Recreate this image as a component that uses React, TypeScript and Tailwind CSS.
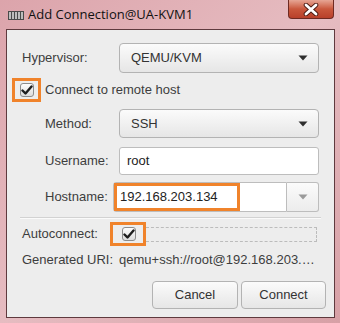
import React from 'react';

const font = { fontFamily: '"Liberation Sans", Arial, sans-serif' };

const CheckMark = () => (
  <div className="w-[14px] h-[14px] rounded-[3px] border border-[#8c8c8c] bg-gradient-to-b from-[#fdfdfd] to-[#dcdcdc] flex items-center justify-center">
    <svg width="12" height="11" viewBox="0 0 12 11">
      <path d="M1.5 5.5 L4.5 8.5 L10.5 1.5" fill="none" stroke="#1e1e1e" strokeWidth="2.4" strokeLinecap="round" strokeLinejoin="round" />
    </svg>
  </div>
);

const Arrow = ({ color = '#2e2e2e' }: { color?: string }) => (
  <svg width="10" height="6" viewBox="0 0 10 6">
    <path d="M0.5 0.5 L9.5 0.5 L5 5.5 Z" fill={color} />
  </svg>
);

const Dropdown = ({ value }: { value: string }) => (
  <div className="flex-1 h-full rounded-[4px] border border-[#b3b3b3] bg-gradient-to-b from-[#fbfbfb] to-[#e6e6e6] flex items-center justify-between pl-[11px] pr-[10px] text-[13px] text-[#333]">
    <span>{value}</span>
    <Arrow />
  </div>
);

export default function App() {
  return (
    <div className="w-[340px] h-[323px] flex flex-col bg-gradient-to-br from-[#dca4ab] via-[#e6bcc1] to-[#d7a0a6] overflow-hidden" style={font}>
      {/* Title bar */}
      <div className="h-[29px] relative flex items-center pl-[8px] shrink-0">
        <svg width="16" height="9" viewBox="0 0 16 9" className="mr-[4px] mt-[1px]">
          <rect x="0" y="0" width="16" height="9" fill="#4a4a4a" />
          <rect x="1" y="1" width="2" height="7" fill="#bdbdbd" />
          <rect x="4" y="1" width="2" height="7" fill="#bdbdbd" />
          <rect x="7" y="1" width="2" height="7" fill="#bdbdbd" />
          <rect x="10" y="1" width="2" height="7" fill="#bdbdbd" />
          <rect x="13" y="1" width="2" height="7" fill="#bdbdbd" />
        </svg>
        <span className="text-[13px] text-[#111]" style={{ fontFamily: '"Open Sans", "Liberation Sans", sans-serif' }}>
          Add Connection@UA-KVM1
        </span>
        <div className="absolute right-[6px] top-0 w-[46px] h-[19px] rounded-b-[4px] border border-t-0 border-[#6e2a22] bg-gradient-to-b from-[#e6a594] via-[#c9573c] to-[#b8402a] flex items-center justify-center">
          <svg width="16" height="13" viewBox="0 0 16 13">
            <path d="M3 2 L13 11 M13 2 L3 11" stroke="#4a1a12" strokeWidth="4.6" strokeLinecap="round" />
            <path d="M3 2 L13 11 M13 2 L3 11" stroke="#ffffff" strokeWidth="2.8" strokeLinecap="round" />
          </svg>
        </div>
      </div>

      {/* Content */}
      <div className="flex-1 ml-[6px] mr-[5px] mb-[5px] border border-[#5f3a3e] bg-[#ededed] flex flex-col pl-[15px] pr-[15px] text-[13px] text-[#3d3d3d]">
        {/* Hypervisor */}
        <div className="flex items-center h-[30px] mt-[13px]">
          <span className="w-[97px]">Hypervisor:</span>
          <Dropdown value="QEMU/KVM" />
        </div>

        {/* Remote host */}
        <div className="flex items-center h-[24px] mt-[5px]">
          <div className="-ml-[10px] w-[29px] h-[24px] border-[3px] border-[#f0832b] flex items-center justify-center">
            <CheckMark />
          </div>
          <span className="ml-[4px]">Connect to remote host</span>
        </div>

        {/* Method */}
        <div className="flex items-center h-[29px] mt-[7px] pl-[23px]">
          <span className="w-[74px]">Method:</span>
          <Dropdown value="SSH" />
        </div>

        {/* Username */}
        <div className="flex items-center h-[28px] mt-[9px] pl-[23px]">
          <span className="w-[74px]">Username:</span>
          <div className="flex-1 h-full border border-[#bdbdbd] rounded-[3px] bg-white flex items-center pl-[7px] text-[#222]">root</div>
        </div>

        {/* Hostname */}
        <div className="flex items-center h-[30px] mt-[7px] pl-[23px]">
          <span className="w-[68px]">Hostname:</span>
          <div className="flex-1 h-full flex">
            <div className="flex-1 h-full border border-[#bdbdbd] rounded-l-[3px] bg-white flex items-center">
              <div className="h-full w-[126px] border-[3px] border-[#f0832b] flex items-center pl-[3px] text-[#222]">
                192.168.203.134
              </div>
            </div>
            <div className="w-[32px] h-full border border-l-0 border-[#bdbdbd] rounded-r-[3px] bg-gradient-to-b from-[#fbfbfb] to-[#ececec] flex items-center justify-center">
              <Arrow color="#9a9a9a" />
            </div>
          </div>
        </div>

        {/* Separator */}
        <div className="mt-[5px] h-[1px] bg-[#d2d2d2] -mx-[2px]" />
        <div className="h-[1px] bg-[#fafafa] -mx-[2px]" />

        {/* Autoconnect */}
        <div className="flex items-center h-[24px] mt-[3px]">
          <span className="w-[88px]">Autoconnect:</span>
          <div className="w-[36px] h-[24px] border-[3px] border-[#f0832b] flex items-center justify-center pl-[2px] relative z-10">
            <CheckMark />
          </div>
          <div className="flex-1 h-[15px] mt-[1px] mr-[2px] border border-l-0 border-dashed border-[#bcbcbc]" />
        </div>

        {/* Generated URI */}
        <div className="flex items-center h-[16px] mt-[6px] whitespace-nowrap">
          <span className="shrink-0">Generated URI:</span>
          <span className="ml-[6px]">qemu+ssh://root@192.168.203.…</span>
        </div>

        {/* Buttons */}
        <div className="flex justify-end gap-[3px] mt-[13px] -mr-[7px]">
          <div className="w-[86px] h-[28px] rounded-[4px] border border-[#b3b3b3] bg-gradient-to-b from-[#fbfbfb] to-[#e6e6e6] flex items-center justify-center text-[#333]">
            Cancel
          </div>
          <div className="w-[85px] h-[28px] rounded-[4px] border border-[#b3b3b3] bg-gradient-to-b from-[#fbfbfb] to-[#e6e6e6] flex items-center justify-center text-[#333]">
            Connect
          </div>
        </div>
      </div>
    </div>
  );
}
